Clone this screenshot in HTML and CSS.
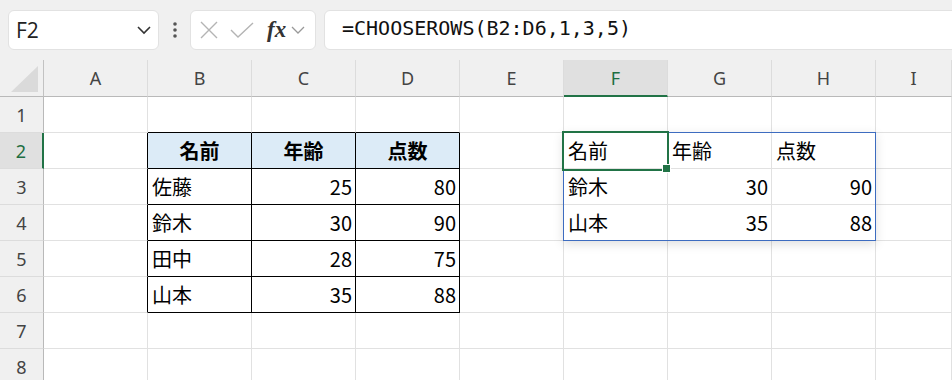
FILE: index.html
```html
<!DOCTYPE html>
<html lang="ja">
<head>
  <meta charset="UTF-8">
  <title>CHOOSEROWS</title>
  <link rel="stylesheet" href="styles.css">
</head>
<body>
<div id="formula-bar">
  <div class="name-box">
    <span>F2</span>
    <svg width="16" height="10" viewBox="0 0 16 10"><path d="M2 2 L8 8 L14 2" fill="none" stroke="#333" stroke-width="1.6"/></svg>
  </div>
  <svg class="more" width="6" height="18" viewBox="0 0 6 18"><circle cx="3" cy="3" r="1.8" fill="#555"/><circle cx="3" cy="9" r="1.8" fill="#555"/><circle cx="3" cy="15" r="1.8" fill="#555"/></svg>
  <div class="func-box">
    <svg width="22" height="22" viewBox="0 0 22 22"><path d="M3 3 L19 19 M19 3 L3 19" stroke="#b4b4b4" stroke-width="1.4" fill="none"/></svg>
    <svg width="26" height="22" viewBox="0 0 26 22"><path d="M2 11 L9 18 L24 4" stroke="#b4b4b4" stroke-width="1.4" fill="none"/></svg>
    <span class="fx">fx</span>
    <svg width="14" height="10" viewBox="0 0 14 10"><path d="M1 2 L7 8 L13 2" fill="none" stroke="#999" stroke-width="1.3"/></svg>
  </div>
  <div class="formula">=CHOOSEROWS(B2:D6,1,3,5)</div>
</div>

<div id="sheet">
  <div class="corner"><svg width="28" height="27" viewBox="0 0 28 27"><polygon points="27,0 27,26 0,26" fill="#dadada"/></svg></div>
  <div class="col-head">A</div>
  <div class="col-head">B</div>
  <div class="col-head">C</div>
  <div class="col-head">D</div>
  <div class="col-head">E</div>
  <div class="col-head selected">F</div>
  <div class="col-head">G</div>
  <div class="col-head">H</div>
  <div class="col-head">I</div>

  <div class="row-head">1</div>
  <div class="cell"></div>
  <div class="cell edge-bottom"></div>
  <div class="cell edge-bottom"></div>
  <div class="cell edge-bottom"></div>
  <div class="cell"></div><div class="cell"></div><div class="cell"></div><div class="cell"></div><div class="cell"></div>

  <div class="row-head selected">2</div>
  <div class="cell edge-right"></div>
  <div class="cell tbl th">名前</div>
  <div class="cell tbl th">年齢</div>
  <div class="cell tbl th">点数</div>
  <div class="cell"></div>
  <div class="cell">名前</div>
  <div class="cell">年齢</div>
  <div class="cell">点数</div>
  <div class="cell"></div>

  <div class="row-head">3</div>
  <div class="cell edge-right"></div>
  <div class="cell tbl">佐藤</div>
  <div class="cell tbl num">25</div>
  <div class="cell tbl num">80</div>
  <div class="cell"></div>
  <div class="cell">鈴木</div>
  <div class="cell num">30</div>
  <div class="cell num">90</div>
  <div class="cell"></div>

  <div class="row-head">4</div>
  <div class="cell edge-right"></div>
  <div class="cell tbl">鈴木</div>
  <div class="cell tbl num">30</div>
  <div class="cell tbl num">90</div>
  <div class="cell"></div>
  <div class="cell">山本</div>
  <div class="cell num">35</div>
  <div class="cell num">88</div>
  <div class="cell"></div>

  <div class="row-head">5</div>
  <div class="cell edge-right"></div>
  <div class="cell tbl">田中</div>
  <div class="cell tbl num">28</div>
  <div class="cell tbl num">75</div>
  <div class="cell"></div><div class="cell"></div><div class="cell"></div><div class="cell"></div><div class="cell"></div>

  <div class="row-head">6</div>
  <div class="cell edge-right"></div>
  <div class="cell tbl">山本</div>
  <div class="cell tbl num">35</div>
  <div class="cell tbl num">88</div>
  <div class="cell"></div><div class="cell"></div><div class="cell"></div><div class="cell"></div><div class="cell"></div>

  <div class="row-head">7</div>
  <div class="cell"></div><div class="cell"></div><div class="cell"></div><div class="cell"></div><div class="cell"></div><div class="cell"></div><div class="cell"></div><div class="cell"></div><div class="cell"></div>

  <div class="row-head">8</div>
  <div class="cell"></div><div class="cell"></div><div class="cell"></div><div class="cell"></div><div class="cell"></div><div class="cell"></div><div class="cell"></div><div class="cell"></div><div class="cell"></div>

  <div class="spill"></div>
  <div class="active"><div class="handle"></div></div>
</div>
</body>
</html>
```

FILE: styles.css
```css
body {
  margin: 0;
  overflow: hidden;
  background-color: #fff;
  font-family: "Noto Sans CJK JP", sans-serif;
}
#formula-bar {
  display: flex;
  align-items: center;
  height: 60px;
  padding: 0 0 0 8px;
  background-color: #f0f0f0;
}
.name-box {
  display: flex;
  align-items: center;
  justify-content: space-between;
  box-sizing: border-box;
  width: 151px;
  height: 40px;
  padding: 0 6px 0 7px;
  background-color: #fff;
  border: 1px solid #e2e2e2;
  border-radius: 6px;
  font-family: "Open Sans", sans-serif;
  font-size: 21px;
  color: #222;
}
.more {
  margin: 0 12px 0 13px;
}
.func-box {
  display: flex;
  align-items: center;
  box-sizing: border-box;
  width: 126px;
  height: 40px;
  padding: 0 4px 0 7px;
  gap: 9px;
  background-color: #fff;
  border: 1px solid #e2e2e2;
  border-radius: 6px;
}
.fx {
  font-family: "Liberation Serif", serif;
  font-style: italic;
  font-weight: bold;
  font-size: 23px;
  color: #333;
  margin-left: 3px;
  margin-right: -4px;
}
.formula {
  flex: 1;
  box-sizing: border-box;
  height: 40px;
  margin: 0 -20px 0 8px;
  padding: 5px 0 0 17px;
  background-color: #fff;
  border: 1px solid #e2e2e2;
  border-radius: 6px;
  font-family: "DejaVu Sans Mono", monospace;
  font-size: 20px;
  color: #111;
}
#sheet {
  position: relative;
  display: grid;
  grid-template-columns: 44px repeat(8, 104px) 1fr;
  grid-template-rows: 37px repeat(8, 36px);
}
#sheet > div {
  box-sizing: border-box;
}
.corner {
  display: flex;
  align-items: flex-end;
  justify-content: flex-end;
  padding: 0 4px 3px 0;
  background-color: #f0f0f0;
  border-right: 1px solid #c2c2c2;
  border-bottom: 1px solid #b9b9b9;
}
.col-head {
  display: flex;
  align-items: center;
  justify-content: center;
  background-color: #f0f0f0;
  border-right: 1px solid #dcdcdc;
  border-bottom: 1px solid #b9b9b9;
  font-family: "Noto Sans", sans-serif;
  font-size: 18px;
  color: #444;
}
.col-head.selected {
  background-color: #e0e0e0;
  border-bottom: 2px solid #217346;
  color: #1e6e42;
}
.row-head {
  display: flex;
  align-items: center;
  justify-content: center;
  background-color: #f0f0f0;
  border-right: 1px solid #b9b9b9;
  border-bottom: 1px solid #dcdcdc;
  font-family: "Noto Sans", sans-serif;
  font-size: 18px;
  color: #444;
}
.row-head.selected {
  background-color: #e0e0e0;
  border-right: 2px solid #217346;
  color: #1e6e42;
}
.cell {
  display: flex;
  align-items: center;
  padding: 0 4px;
  border-right: 1px solid #e1e1e1;
  border-bottom: 1px solid #e1e1e1;
  font-size: 20px;
  color: #000;
  white-space: nowrap;
}
.cell.num {
  justify-content: flex-end;
  padding-right: 3px;
}
.cell.tbl {
  border-right-color: #000;
  border-bottom-color: #000;
}
.cell.th {
  justify-content: center;
  font-weight: bold;
  background-color: #dcebf7;
}
.cell.edge-right {
  border-right-color: #000;
}
.cell.edge-bottom {
  border-bottom-color: #000;
}
.spill {
  position: absolute;
  grid-column: 7 / 10;
  grid-row: 3 / 6;
  top: -1px;
  left: -1px;
  right: 0;
  bottom: 0;
  border: 1px solid #3d6cc0;
  box-shadow: 0 3px 10px rgba(0, 0, 0, 0.13);
  pointer-events: none;
}
.active {
  position: absolute;
  grid-column: 7 / 8;
  grid-row: 3 / 4;
  top: -2px;
  left: -2px;
  right: -1px;
  bottom: -2px;
  border: 2px solid #217346;
}
.handle {
  position: absolute;
  right: -4px;
  bottom: -4px;
  width: 7px;
  height: 7px;
  background-color: #217346;
  border: 1px solid #fff;
}
```
